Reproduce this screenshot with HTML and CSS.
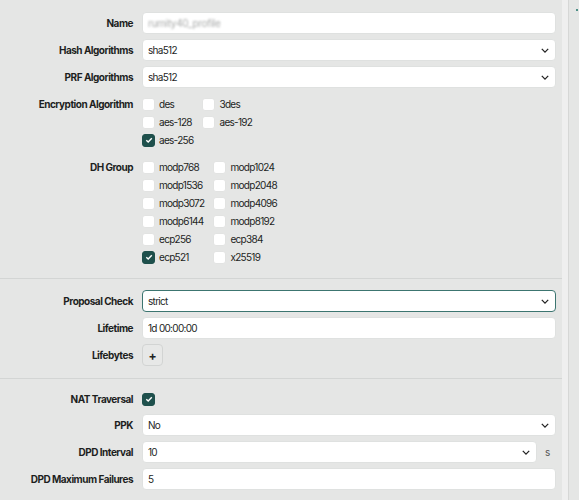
FILE: index.html
```html
<!DOCTYPE html>
<html lang="en">
<head>
    <meta charset="UTF-8">
    <meta name="viewport" content="width=device-width, initial-scale=1.0">
    <title>IPsec Proposal</title>
    <link rel="stylesheet" href="styles.css">
</head>
<body>

    <div class="page">
        <div class="panel">

            <section class="section first">
                <div class="row">
                    <label class="label">Name</label>
                    <div class="field"><span class="blurred">rumity40_profile</span></div>
                </div>
                <div class="row">
                    <label class="label">Hash Algorithms</label>
                    <div class="field select">
                        <span>sha512</span>
                        <svg class="chevron" viewBox="0 0 10 6"><path d="M1 1l4 4 4-4"/></svg>
                    </div>
                </div>
                <div class="row">
                    <label class="label">PRF Algorithms</label>
                    <div class="field select">
                        <span>sha512</span>
                        <svg class="chevron" viewBox="0 0 10 6"><path d="M1 1l4 4 4-4"/></svg>
                    </div>
                </div>
                <div class="row checks enc">
                    <label class="label">Encryption Algorithm</label>
                    <div class="check-grid">
                        <div class="check"><span class="box"></span>des</div>
                        <div class="check"><span class="box"></span>3des</div>
                        <div class="check"><span class="box"></span>aes-128</div>
                        <div class="check"><span class="box"></span>aes-192</div>
                        <div class="check"><span class="box on"><svg viewBox="0 0 10 10"><path d="M2.3 5.2l1.9 1.9 3.6-3.8"/></svg></span>aes-256</div>
                    </div>
                </div>
                <div class="row checks dh">
                    <label class="label">DH Group</label>
                    <div class="check-grid">
                        <div class="check"><span class="box"></span>modp768</div>
                        <div class="check"><span class="box"></span>modp1024</div>
                        <div class="check"><span class="box"></span>modp1536</div>
                        <div class="check"><span class="box"></span>modp2048</div>
                        <div class="check"><span class="box"></span>modp3072</div>
                        <div class="check"><span class="box"></span>modp4096</div>
                        <div class="check"><span class="box"></span>modp6144</div>
                        <div class="check"><span class="box"></span>modp8192</div>
                        <div class="check"><span class="box"></span>ecp256</div>
                        <div class="check"><span class="box"></span>ecp384</div>
                        <div class="check"><span class="box on"><svg viewBox="0 0 10 10"><path d="M2.3 5.2l1.9 1.9 3.6-3.8"/></svg></span>ecp521</div>
                        <div class="check"><span class="box"></span>x25519</div>
                    </div>
                </div>
            </section>

            <section class="section">
                <div class="row">
                    <label class="label">Proposal Check</label>
                    <div class="field select focused">
                        <span>strict</span>
                        <svg class="chevron" viewBox="0 0 10 6"><path d="M1 1l4 4 4-4"/></svg>
                    </div>
                </div>
                <div class="row">
                    <label class="label">Lifetime</label>
                    <div class="field"><span>1d 00:00:00</span></div>
                </div>
                <div class="row">
                    <label class="label">Lifebytes</label>
                    <div><button class="add-btn">+</button></div>
                </div>
            </section>

            <section class="section last">
                <div class="row checks nat">
                    <label class="label">NAT Traversal</label>
                    <div class="check"><span class="box on"><svg viewBox="0 0 10 10"><path d="M2.3 5.2l1.9 1.9 3.6-3.8"/></svg></span></div>
                </div>
                <div class="row">
                    <label class="label">PPK</label>
                    <div class="field select">
                        <span>No</span>
                        <svg class="chevron" viewBox="0 0 10 6"><path d="M1 1l4 4 4-4"/></svg>
                    </div>
                </div>
                <div class="row">
                    <label class="label">DPD Interval</label>
                    <div class="with-unit">
                        <div class="field select">
                            <span>10</span>
                            <svg class="chevron" viewBox="0 0 10 6"><path d="M1 1l4 4 4-4"/></svg>
                        </div>
                        <span class="unit">s</span>
                    </div>
                </div>
                <div class="row">
                    <label class="label">DPD Maximum Failures</label>
                    <div class="field"><span>5</span></div>
                </div>
            </section>

        </div>
        <div class="rail"></div>
        <div class="side"><span class="dot"></span></div>
    </div>

</body>
</html>
```

FILE: styles.css
```css
body {
    margin: 0;
    font-family: Inter, "Noto Sans", sans-serif;
    font-size: 10px;
    letter-spacing: -0.7px;
    color: #1d1f1e;
    background-color: #e5e6e5;
}

.page {
    display: flex;
    height: 500px;
    overflow: hidden;
}

.panel {
    width: 556px;
    padding-right: 6px;
}

.section {
    display: flex;
    flex-direction: column;
    gap: 5px;
    padding: 11px 6px 12px 0;
    margin-right: -6px;
    border-bottom: 1px solid #d3d5d4;
}

.section.first {
    padding-top: 12px;
}

.section.last {
    border-bottom: none;
}

.row {
    display: grid;
    grid-template-columns: 133px 1fr;
    column-gap: 9px;
    align-items: center;
    min-height: 22px;
}

.label {
    text-align: right;
    font-weight: 700;
    letter-spacing: -0.5px;
}

.field {
    display: flex;
    align-items: center;
    height: 22px;
    box-sizing: border-box;
    padding: 0 6px 0 5px;
    background-color: #fff;
    border: 1px solid #dfe1e0;
    border-radius: 4px;
}

.field span {
    flex: 1;
}

.blurred {
    color: #a9abaa;
    letter-spacing: -0.3px;
    filter: blur(1.1px);
}

.focused {
    border-color: #3c7570;
}

.chevron {
    width: 8px;
    height: 5px;
    fill: none;
    stroke: #222;
    stroke-width: 1.6;
}

.row.checks {
    align-items: start;
    min-height: 0;
}

.row.checks .label {
    line-height: 18px;
}

.row.enc {
    margin-top: 2px;
}

.row.dh {
    margin-top: 4px;
}

.row.nat {
    margin-bottom: 1px;
}

.check-grid {
    display: grid;
    grid-template-columns: auto auto;
    justify-content: start;
    column-gap: 9px;
}

.check {
    display: flex;
    align-items: center;
    gap: 4px;
    height: 18px;
}

.box {
    width: 13px;
    height: 13px;
    box-sizing: border-box;
    background-color: #fff;
    border: 1px solid #e2e3e2;
    border-radius: 3px;
    display: flex;
    align-items: center;
    justify-content: center;
}

.box.on {
    background-color: #1e504c;
    border-color: #1e504c;
}

.box svg {
    width: 10px;
    height: 10px;
    fill: none;
    stroke: #fff;
    stroke-width: 1.4;
}

.add-btn {
    width: 21px;
    height: 22px;
    padding: 0;
    font-family: Inter, sans-serif;
    font-size: 12px;
    font-weight: 700;
    color: #222;
    background-color: #e7e8e7;
    border: 1px solid #d2d4d3;
    border-radius: 4px;
    cursor: pointer;
}

.with-unit {
    display: flex;
    align-items: center;
    gap: 8px;
}

.with-unit .field {
    flex: 1;
}

.unit {
    width: 11px;
    color: #555;
}

.rail {
    width: 6px;
    background-color: #efefef;
    border-right: 1px solid #d6d7d6;
}

.side {
    flex: 1;
    position: relative;
}

.dot {
    position: absolute;
    top: 9px;
    right: 1px;
    width: 2px;
    height: 2px;
    background-color: #4d8f86;
}
```
